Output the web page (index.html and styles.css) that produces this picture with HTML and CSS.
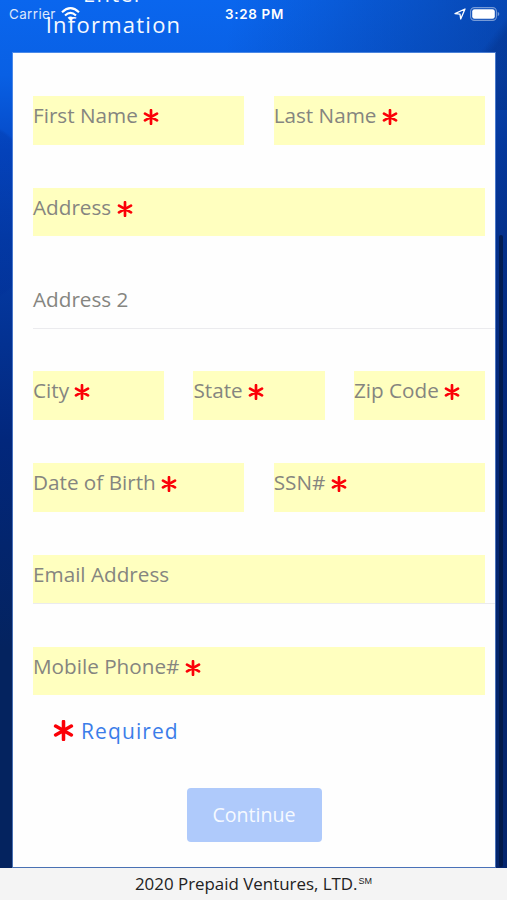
FILE: index.html
```html
<!DOCTYPE html>
<html lang="en">
<head>
  <meta charset="UTF-8" />
  <meta name="viewport" content="width=device-width, initial-scale=1.0"/>
  <title>Enter Information</title>
  <link rel="stylesheet" href="styles.css">
</head>
<body>
  <svg class="symbols">
    <symbol id="star" viewBox="0 0 16 16">
      <path d="M8 1.2V14.8M2 4.6L14 11.4M14 4.6L2 11.4" fill="none" stroke="#fb0007" stroke-width="2.7" stroke-linecap="round"/>
    </symbol>
  </svg>

  <!-- Phone status bar -->
  <div class="status-bar">
    <div class="status-left">
      <span class="carrier">Carrier</span>
      <svg class="wifi" viewBox="0 0 19 14">
        <g fill="none" stroke="#fff" stroke-width="2.1">
          <path d="M1 5.2Q9.5 -2.8 18 5.2"/>
          <path d="M4 8.4Q9.5 3.2 15 8.4"/>
        </g>
        <path d="M6.6 10.7Q9.5 8.3 12.4 10.7L9.5 13.7Z" fill="#fff"/>
      </svg>
    </div>
    <span class="time">3:28 PM</span>
    <div class="status-right">
      <svg class="location" viewBox="0 0 12 12">
        <path d="M1 5.6L11 1L6.7 11L6 6.2Z" fill="none" stroke="#fff" stroke-width="1.3" stroke-linejoin="round"/>
      </svg>
      <svg class="battery" viewBox="0 0 30 14">
        <rect x="0.6" y="0.6" width="25.8" height="12.8" rx="3.8" fill="none" stroke="#fff" stroke-opacity="0.45" stroke-width="1.1"/>
        <rect x="2.2" y="2.2" width="22.6" height="9.6" rx="2.3" fill="#fff"/>
        <path d="M27.7 4.7Q29.3 5.5 29.3 7Q29.3 8.5 27.7 9.3Z" fill="#fff" fill-opacity="0.45"/>
      </svg>
    </div>
  </div>

  <div class="page">
    <h1 class="title">Enter<br>Information</h1>

    <form class="card">
      <div class="row">
        <label class="field">First Name <svg class="star"><use href="#star"/></svg></label>
        <label class="field">Last Name <svg class="star"><use href="#star"/></svg></label>
      </div>
      <div class="row">
        <label class="field">Address <svg class="star"><use href="#star"/></svg></label>
      </div>
      <div class="row underline">
        <label class="field plain">Address 2</label>
      </div>
      <div class="row">
        <label class="field">City <svg class="star"><use href="#star"/></svg></label>
        <label class="field">State <svg class="star"><use href="#star"/></svg></label>
        <label class="field">Zip Code <svg class="star"><use href="#star"/></svg></label>
      </div>
      <div class="row">
        <label class="field">Date of Birth <svg class="star"><use href="#star"/></svg></label>
        <label class="field">SSN# <svg class="star"><use href="#star"/></svg></label>
      </div>
      <div class="row underline">
        <label class="field">Email Address</label>
      </div>
      <div class="row">
        <label class="field">Mobile Phone# <svg class="star"><use href="#star"/></svg></label>
      </div>
      <p class="required"><svg class="star big"><use href="#star"/></svg><span>Required</span></p>
      <button class="continue" type="button">Continue</button>
    </form>
  </div>

  <div class="scrollbar"></div>

  <footer class="footer">2020 Prepaid Ventures, LTD.<span class="mark">SM</span></footer>
</body>
</html>
```
FILE: styles.css
```css
* {
  margin: 0;
  padding: 0;
  box-sizing: border-box;
}

body {
  height: 900px;
  overflow: hidden;
  display: flex;
  flex-direction: column;
  position: relative;
  font-family: "Open Sans", sans-serif;
  background:
    radial-gradient(ellipse 60px 90px at -20px 213px, rgba(0, 45, 150, 0.25) 96%, transparent 100%),
    linear-gradient(127deg, transparent 88%, rgba(0, 25, 90, 0.22) 90%) 0 0 / 507px 110px no-repeat,
    linear-gradient(100deg, transparent 35%, rgba(4, 38, 115, 0.75) 100%),
    linear-gradient(180deg, #0a66ee 0, #0960e4 75px, #0549c6 150px, #043ca8 240px, #02277c 440px, #04235f 650px, #04235f 100%);
}

.symbols {
  position: absolute;
  width: 0;
  height: 0;
}

/* Status bar lies over the scrolled title */
.status-bar {
  position: absolute;
  top: 0;
  left: 0;
  width: 100%;
  height: 27px;
  padding: 0 7px 0 9px;
  display: grid;
  grid-template-columns: 1fr auto 1fr;
  align-items: center;
  color: #fff;
  font-family: Inter, sans-serif;
  font-size: 13px;
}

.status-left,
.status-right {
  display: flex;
  align-items: center;
}

.status-left {
  gap: 5px;
}

.status-right {
  justify-content: flex-end;
  gap: 4px;
}

.carrier {
  font-size: 13.4px;
  letter-spacing: 0.4px;
  opacity: 0.85;
}

.time {
  font-size: 13.4px;
  font-weight: 600;
  letter-spacing: 0.7px;
}

.wifi {
  width: 19px;
  height: 14px;
}

.location {
  width: 12px;
  height: 12px;
}

.battery {
  width: 30px;
  height: 14px;
}

.page {
  flex: 1;
  padding: 0 12px 0 13px;
}

.title {
  width: 201px;
  height: 53px;
  margin-top: -22px;
  margin-bottom: 22px;
  color: #f5f9ff;
  font-size: 22px;
  font-weight: 500;
  line-height: 31px;
  letter-spacing: 1.25px;
  text-align: center;
}

.card {
  height: 814px;
  padding: 43px 10px 0 20px;
  background: #fefefe;
  box-shadow: 0 0 0 1px rgba(120, 165, 235, 0.6);
  display: flex;
  flex-direction: column;
}

.row {
  display: flex;
  gap: 29.4px;
  height: 49px;
  margin-bottom: 42.8px;
}

.underline {
  margin-right: -10px;
  padding-right: 10px;
  border-bottom: 1px solid #ebebee;
}

.field {
  flex: 1 1 0;
  height: 48.5px;
  padding-top: 5px;
  background: #ffffbf;
  color: #858580;
  font-size: 20.7px;
  line-height: 28px;
  white-space: nowrap;
}

.plain {
  background: none;
}

.star {
  width: 16px;
  height: 16px;
  vertical-align: -2px;
}

.big {
  width: 21px;
  height: 21px;
}

.required {
  display: flex;
  align-items: center;
  gap: 7px;
  height: 30px;
  margin: -23px 0 42.4px 20px;
  color: #3b7de9;
  font-size: 21px;
  letter-spacing: 1.1px;
}

.continue {
  align-self: center;
  width: 135px;
  height: 54px;
  margin-right: 10px;
  border: none;
  border-radius: 4px;
  background: #afcafb;
  color: #f5f9ff;
  font-family: inherit;
  font-size: 19.6px;
}

.scrollbar {
  position: absolute;
  top: 235px;
  right: 4px;
  width: 4px;
  height: 632px;
  border-radius: 2px;
  background: rgba(0, 20, 60, 0.7);
}

.footer {
  position: relative;
  height: 32px;
  background: #f4f4f4;
  color: #222;
  font-size: 16.9px;
  line-height: 26px;
  text-align: center;
}

.mark {
  margin-left: 1px;
  font-family: "Liberation Sans", sans-serif;
  font-size: 9px;
  vertical-align: 6px;
}
```
